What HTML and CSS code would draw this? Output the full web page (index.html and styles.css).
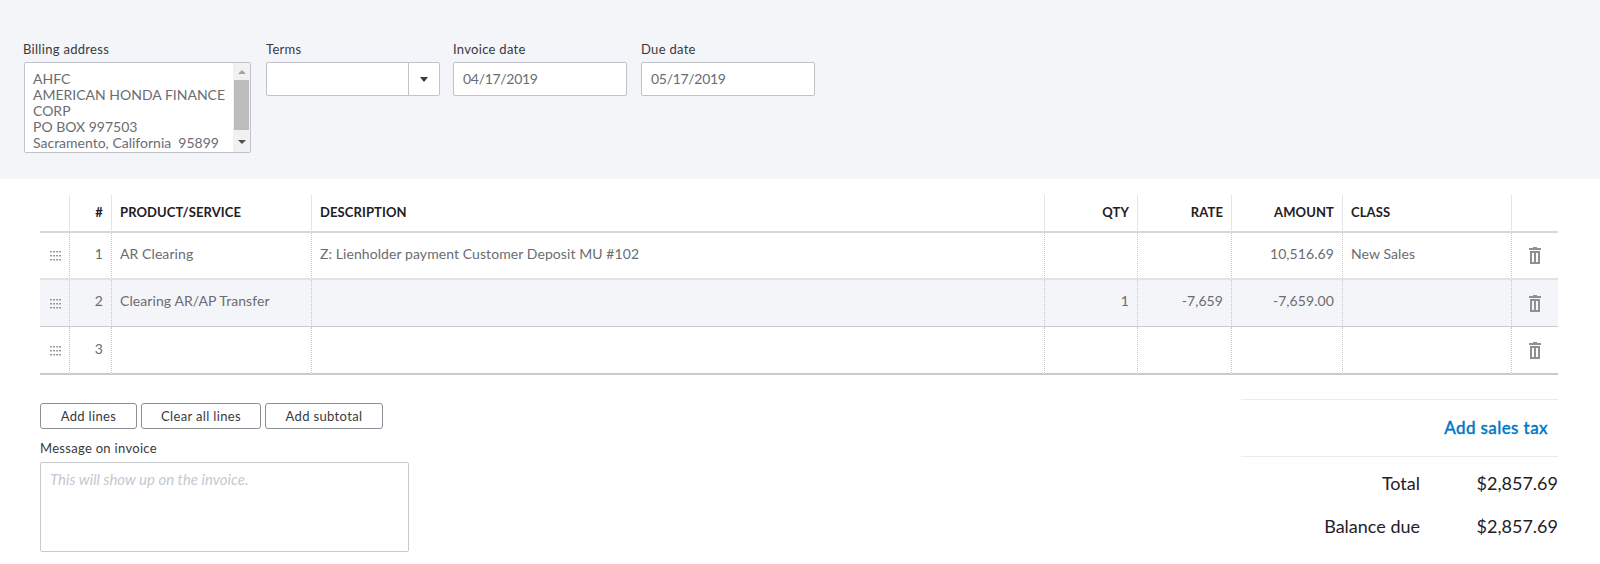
FILE: index.html
```html
<!DOCTYPE html>
<html lang="en">
<head>
<meta charset="utf-8">
<title>Invoice</title>
<link rel="stylesheet" href="styles.css">
</head>
<body>
<svg width="0" height="0" class="defs">
  <defs>
    <symbol id="grip" viewBox="0 0 12 11">
      <g fill="#8d9096">
        <rect x="0" y="0" width="2" height="1.6"/><rect x="3.4" y="0" width="2" height="1.6"/><rect x="6.8" y="0" width="2" height="1.6"/><rect x="10" y="0" width="2" height="1.6"/>
        <rect x="0" y="4.4" width="2" height="1.6"/><rect x="3.4" y="4.4" width="2" height="1.6"/><rect x="6.8" y="4.4" width="2" height="1.6"/><rect x="10" y="4.4" width="2" height="1.6"/>
        <rect x="0" y="8.8" width="2" height="1.6"/><rect x="3.4" y="8.8" width="2" height="1.6"/><rect x="6.8" y="8.8" width="2" height="1.6"/><rect x="10" y="8.8" width="2" height="1.6"/>
      </g>
    </symbol>
    <symbol id="trash" viewBox="0 0 12 17">
      <path fill="#8d9096" d="M4 0h4v1h4v2H0V1h4zM1 4h10v13H1zM3 6v9h2V6zM7 6v9h2V6z" fill-rule="evenodd"/>
    </symbol>
  </defs>
</svg>
<header class="head-band">
  <div class="field field-address">
    <label class="label label-address">Billing address</label>
    <div class="address-box">
      <div class="address-text">AHFC<br>AMERICAN HONDA FINANCE CORP<br>PO BOX 997503<br>Sacramento, California&nbsp; 95899</div>
      <div class="scrollbar">
        <span class="arrow-up"></span>
        <span class="thumb"></span>
        <span class="arrow-down"></span>
      </div>
    </div>
  </div>
  <div class="field field-terms">
    <label class="label">Terms</label>
    <div class="select-box">
      <span class="select-value"></span>
      <span class="select-btn"><span class="caret"></span></span>
    </div>
  </div>
  <div class="field field-date">
    <label class="label">Invoice date</label>
    <div class="date-box">04/17/2019</div>
  </div>
  <div class="field field-date">
    <label class="label">Due date</label>
    <div class="date-box">05/17/2019</div>
  </div>
</header>

<main class="body-area">
  <table class="lines">
    <colgroup>
      <col class="c-grip"><col class="c-num"><col class="c-prod"><col class="c-desc"><col class="c-qty"><col class="c-rate"><col class="c-amt"><col class="c-class"><col class="c-del">
    </colgroup>
    <thead>
      <tr>
        <th></th><th class="right">#</th><th>PRODUCT/SERVICE</th><th>DESCRIPTION</th><th class="right">QTY</th><th class="right">RATE</th><th class="right">AMOUNT</th><th>CLASS</th><th></th>
      </tr>
    </thead>
    <tbody>
      <tr class="first">
        <td class="center"><svg class="grip"><use href="#grip"/></svg></td>
        <td class="right">1</td><td>AR Clearing</td><td>Z: Lienholder payment Customer Deposit MU #102</td><td></td><td></td><td class="right">10,516.69</td><td>New Sales</td>
        <td class="center"><svg class="trash"><use href="#trash"/></svg></td>
      </tr>
      <tr class="alt">
        <td class="center"><svg class="grip"><use href="#grip"/></svg></td>
        <td class="right">2</td><td>Clearing AR/AP Transfer</td><td></td><td class="right">1</td><td class="right">-7,659</td><td class="right">-7,659.00</td><td></td>
        <td class="center"><svg class="trash"><use href="#trash"/></svg></td>
      </tr>
      <tr class="last">
        <td class="center"><svg class="grip"><use href="#grip"/></svg></td>
        <td class="right">3</td><td></td><td></td><td></td><td></td><td></td><td></td>
        <td class="center"><svg class="trash"><use href="#trash"/></svg></td>
      </tr>
    </tbody>
  </table>

  <div class="bottom">
    <div class="bottom-left">
      <div class="btn-row">
        <button class="btn btn-lines">Add lines</button>
        <button class="btn btn-clear">Clear all lines</button>
        <button class="btn btn-sub">Add subtotal</button>
      </div>
      <label class="label label-message">Message on invoice</label>
      <div class="message-box">This will show up on the invoice.</div>
    </div>
    <div class="totals">
      <div class="tax-row"><a class="tax-link">Add sales tax</a></div>
      <div class="total-row total-first"><span class="total-label">Total</span><span class="total-value">$2,857.69</span></div>
      <div class="total-row"><span class="total-label">Balance due</span><span class="total-value">$2,857.69</span></div>
    </div>
  </div>
</main>
</body>
</html>
```

FILE: styles.css
```css
* { box-sizing: border-box; }
html, body { margin: 0; padding: 0; }
body {
  width: 1600px;
  height: 564px;
  overflow: hidden;
  background: #fff;
  font-family: "Lato", "Open Sans", sans-serif;
  font-size: 14px;
  color: #6b6c72;
}
.defs { display: block; height: 0; }

.head-band {
  height: 179px;
  background: #f4f5f8;
  padding: 39px 0 0 24px;
  display: flex;
  gap: 14px;
  align-items: flex-start;
}
.field { display: flex; flex-direction: column; }
.field-address { width: 227px; margin-right: 1px; }
.field-terms { width: 174px; margin-right: -1px; }
.field-date { width: 174px; }
.label {
  display: block;
  font-size: 13px;
  line-height: 20px;
  height: 23px;
  letter-spacing: 0.3px;
  color: #393a3d;
}
.label-address { margin-left: -1px; }

.address-box {
  height: 91px;
  background: #fff;
  border: 1px solid #c0c3c9;
  border-radius: 2px;
  display: flex;
  overflow: hidden;
}
.address-text {
  flex: 1;
  padding: 8px 0 0 8px;
  font-size: 14px;
  line-height: 16px;
  color: #6b6c72;
}
.scrollbar {
  width: 17px;
  flex: none;
  background: #f1f1f1;
  display: flex;
  flex-direction: column;
  align-items: center;
}
.thumb { width: 15px; height: 50px; background: #bcbcbc; margin: 6px 0 10px; }
.arrow-up, .arrow-down { width: 0; height: 0; border-left: 4px solid transparent; border-right: 4px solid transparent; }
.arrow-up { border-bottom: 4px solid #a3a3a3; margin-top: 7px; }
.arrow-down { border-top: 4px solid #505050; }

.select-box {
  height: 34px;
  background: #fff;
  border: 1px solid #c0c3c9;
  border-radius: 2px;
  display: flex;
}
.select-value { flex: 1; }
.select-btn {
  width: 31px;
  border-left: 1px solid #c0c3c9;
  display: flex;
  align-items: center;
  justify-content: center;
}
.caret {
  width: 0; height: 0;
  border-left: 4px solid transparent;
  border-right: 4px solid transparent;
  border-top: 5px solid #393a3d;
}
.date-box {
  height: 34px;
  background: #fff;
  border: 1px solid #c0c3c9;
  border-radius: 2px;
  padding: 0 9px;
  line-height: 32px;
  font-size: 14px;
  letter-spacing: -0.3px;
  color: #6b6c72;
}

.body-area { padding: 16px 42px 0 40px; }

.lines {
  width: 1518px;
  table-layout: fixed;
  border-collapse: separate;
  border-spacing: 0;
}
.c-grip { width: 30px; }
.c-num { width: 42px; }
.c-prod { width: 200px; }
.c-desc { width: 733px; }
.c-qty { width: 93px; }
.c-rate { width: 94px; }
.c-amt { width: 111px; }
.c-class { width: 169px; }
.c-del { width: 46px; }

th {
  height: 38px;
  padding: 0 8px 2px;
  font-size: 13px;
  font-weight: 700;
  letter-spacing: 0.1px;
  color: #1f2024;
  text-align: left;
  border-right: 1px solid #e3e5e8;
  border-bottom: 2px solid #d4d7dc;
}
td {
  height: 47px;
  padding: 0 8px 5px;
  font-size: 14px;
  letter-spacing: 0.08px;
  color: #6b6c72;
  border-right: 1px dotted #c4c6ca;
  vertical-align: middle;
}
th:last-child, td:last-child { border-right: 0; }
.right { text-align: right; }
td.center { text-align: center; padding: 0; }
.first td { border-bottom: 2px solid #e0e2e6; }
.alt td { background: #f4f5f8; border-bottom: 1px solid #c8cacf; }
.last td { border-bottom: 2px solid #c8cacd; height: 48px; padding-bottom: 3px; }
.last td.center { padding: 0; }
.grip { width: 11px; height: 10px; display: block; margin: 1px 0 0 10px; }
.trash { width: 12px; height: 17px; display: block; margin: 0 0 0 17px; }

.bottom { display: flex; justify-content: space-between; }
.bottom-left { width: 369px; padding-top: 28px; }
.btn-row { display: flex; gap: 4px; }
.btn {
  height: 26px;
  padding: 0;
  background: #fff;
  border: 1px solid #8d9096;
  border-radius: 3px;
  font-family: inherit;
  font-size: 13px;
  letter-spacing: 0.35px;
  color: #393a3d;
}
.btn-lines { width: 97px; }
.btn-clear { width: 120px; }
.btn-sub { width: 118px; }
.label-message { margin-top: 8px; height: 25px; line-height: 22px; }
.message-box {
  height: 90px;
  border: 1px solid #c8cacf;
  border-radius: 2px;
  padding: 7px 9px;
  font-style: italic;
  font-size: 15px;
  color: #c4c8d0;
}
.totals { width: 317px; padding-top: 24px; }
.tax-row {
  height: 58px;
  border-top: 1px solid #e9ebee;
  border-bottom: 1px solid #e9ebee;
  display: flex;
  align-items: center;
  justify-content: flex-end;
  padding: 0 10px 2px 0;
}
.tax-link { font-size: 17px; font-weight: 500; letter-spacing: 0.4px; -webkit-text-stroke: 0.35px #0077c5; color: #0077c5; }
.total-row {
  display: flex;
  justify-content: flex-end;
  font-size: 18px;
  line-height: 22px;
  color: #1f2024;
  margin-top: 21px;
}
.total-first { margin-top: 15px; }
.total-label { text-align: right; }
.total-value { width: 138px; text-align: right; }
```
